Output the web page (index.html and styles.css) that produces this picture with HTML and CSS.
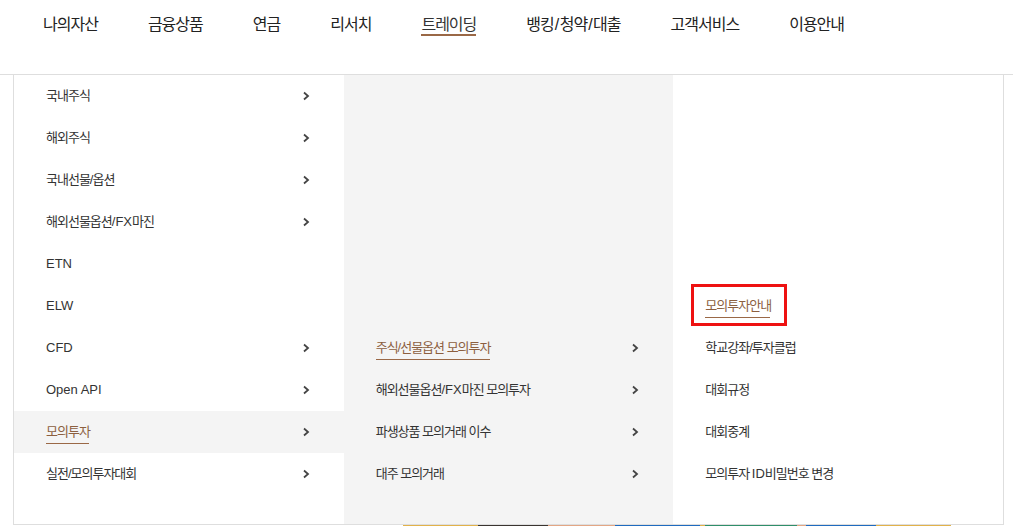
FILE: index.html
```html
<html>
<head>

	<title>트레이딩</title>

	<link rel="stylesheet" href="styles.css">

</head>
<body>

	<div class="gnb">
		<a class="gnb-item">나의자산</a>
		<a class="gnb-item">금융상품</a>
		<a class="gnb-item">연금</a>
		<a class="gnb-item">리서치</a>
		<a class="gnb-item on">트레이딩</a>
		<a class="gnb-item">뱅킹<span class="sl">/</span>청약<span class="sl">/</span>대출</a>
		<a class="gnb-item">고객서비스</a>
		<a class="gnb-item">이용안내</a>
	</div>

	<div class="drop">
		<div class="col">
			<a class="item"><span class="label">국내주식</span><svg class="chev" viewBox="0 0 8 10"><polyline points="2,1.5 6,5 2,8.5"/></svg></a>
			<a class="item"><span class="label">해외주식</span><svg class="chev" viewBox="0 0 8 10"><polyline points="2,1.5 6,5 2,8.5"/></svg></a>
			<a class="item"><span class="label">국내선물/옵션</span><svg class="chev" viewBox="0 0 8 10"><polyline points="2,1.5 6,5 2,8.5"/></svg></a>
			<a class="item"><span class="label">해외선물옵션<span class="en">/FX</span>마진</span><svg class="chev" viewBox="0 0 8 10"><polyline points="2,1.5 6,5 2,8.5"/></svg></a>
			<a class="item"><span class="label en">ETN</span></a>
			<a class="item"><span class="label en">ELW</span></a>
			<a class="item"><span class="label en">CFD</span><svg class="chev" viewBox="0 0 8 10"><polyline points="2,1.5 6,5 2,8.5"/></svg></a>
			<a class="item"><span class="label en">Open API</span><svg class="chev" viewBox="0 0 8 10"><polyline points="2,1.5 6,5 2,8.5"/></svg></a>
			<a class="item hover"><span class="label on">모의투자</span><svg class="chev" viewBox="0 0 8 10"><polyline points="2,1.5 6,5 2,8.5"/></svg></a>
			<a class="item"><span class="label">실전/모의투자대회</span><svg class="chev" viewBox="0 0 8 10"><polyline points="2,1.5 6,5 2,8.5"/></svg></a>
		</div>
		<div class="col col-gray">
			<div class="spacer six"></div>
			<a class="item"><span class="label on">주식/선물옵션 모의투자</span><svg class="chev" viewBox="0 0 8 10"><polyline points="2,1.5 6,5 2,8.5"/></svg></a>
			<a class="item"><span class="label">해외선물옵션<span class="en">/FX</span>마진 모의투자</span><svg class="chev" viewBox="0 0 8 10"><polyline points="2,1.5 6,5 2,8.5"/></svg></a>
			<a class="item"><span class="label">파생상품 모의거래 이수</span><svg class="chev" viewBox="0 0 8 10"><polyline points="2,1.5 6,5 2,8.5"/></svg></a>
			<a class="item"><span class="label">대주 모의거래</span><svg class="chev" viewBox="0 0 8 10"><polyline points="2,1.5 6,5 2,8.5"/></svg></a>
		</div>
		<div class="col">
			<div class="spacer five"></div>
			<a class="item"><span class="label on marked">모의투자안내</span></a>
			<a class="item"><span class="label">학교강좌/투자클럽</span></a>
			<a class="item"><span class="label">대회규정</span></a>
			<a class="item"><span class="label">대회중계</span></a>
			<a class="item"><span class="label">모의투자 <span class="en">ID</span>비밀번호 변경</span></a>
		</div>
	</div>

	<div class="strip">
		<span class="seg" style="width:403px;background:#fff"></span>
		<span class="seg" style="width:75px;background:#e2b24a"></span>
		<span class="seg" style="width:70px;background:#3a3530"></span>
		<span class="seg" style="width:67px;background:#e3a684"></span>
		<span class="seg" style="width:85px;background:#1f6bbf"></span>
		<span class="seg" style="width:5px;background:#e2b24a"></span>
		<span class="seg" style="width:92px;background:#2f8f6a"></span>
		<span class="seg" style="width:9px;background:#e3a684"></span>
		<span class="seg" style="width:70px;background:#1f6bbf"></span>
		<span class="seg" style="width:75px;background:#e2b24a"></span>
	</div>

</body>
</html>
```

FILE: styles.css
```css
body {
	background: white;
	color: #333;
	margin: 0;
	padding: 0;
	font-family: "Liberation Sans", "Noto Sans CJK KR", sans-serif;
	overflow: hidden;
}
a {
	text-decoration: none;
	color: inherit;
}
.gnb {
	display: flex;
	gap: 50px;
	height: 75px;
	padding-left: 43px;
	border-bottom: 1px solid #dedede;
	box-sizing: border-box;
}
.gnb-item {
	font-size: 16px;
	letter-spacing: -1px;
	color: #222;
	line-height: 20px;
	padding-top: 15px;
	height: 21px;
}
.gnb-item .sl {
	letter-spacing: 0.5px;
	padding-left: 1px;
}
.gnb-item.on {
	color: #333;
	border-bottom: 2px solid #9a6846;
	height: 19px;
}
.drop {
	display: flex;
	margin-left: 13px;
	width: 991px;
	height: 450px;
	border-left: 1px solid #dedede;
	border-right: 1px solid #dedede;
	border-bottom: 1px solid #dedede;
	box-sizing: border-box;
}
.col {
	width: 330px;
	display: flex;
	flex-direction: column;
}
.col-gray {
	background: #f4f4f4;
}
.spacer.six {
	height: 252px;
}
.spacer.five {
	height: 210px;
}
.item {
	display: flex;
	align-items: center;
	justify-content: space-between;
	height: 42px;
	padding: 0 34px 0 32px;
	font-size: 13px;
	letter-spacing: -1px;
	color: #333;
}
.item.hover {
	background: #f4f4f4;
}
.label {
	line-height: 16px;
	position: relative;
}
.en {
	letter-spacing: 0;
}
.label.on {
	color: #8c5f3f;
}
.label.on::after {
	content: "";
	position: absolute;
	left: 0;
	right: 1px;
	bottom: -4px;
	border-bottom: 1.5px solid #9a6846;
}
.label.marked::before {
	content: "";
	position: absolute;
	left: -14px;
	right: -16px;
	top: -14px;
	bottom: -12px;
	border: 3px solid #ee1111;
}
.chev {
	width: 8px;
	height: 10px;
	fill: none;
	stroke: #444;
	stroke-width: 1.8;
}
.strip {
	display: flex;
	height: 1px;
}
.seg {
	display: block;
	height: 1px;
}
```
